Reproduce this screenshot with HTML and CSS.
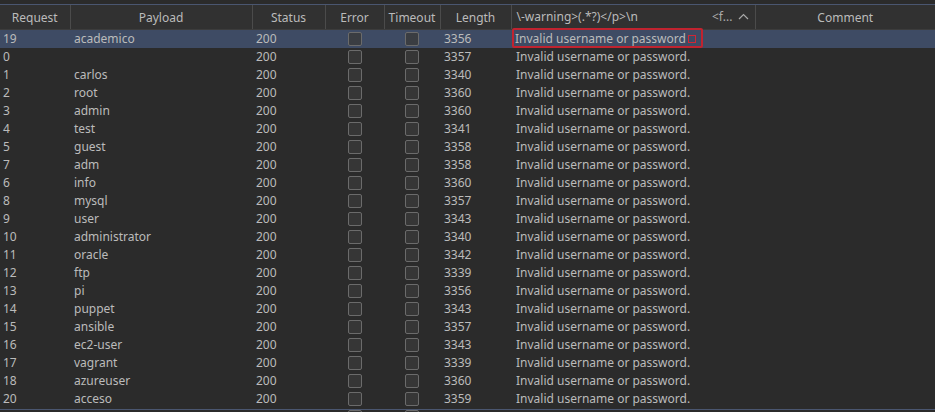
FILE: index.html
```html
<!DOCTYPE html>
<html>
<head>
<meta charset="utf-8">
<link rel="stylesheet" href="styles.css">
</head>
<body>
<div class="panel">
  <div class="topstrip"></div>
  <table class="grid">
    <colgroup>
      <col class="c-req"><col class="c-pay"><col class="c-stat"><col class="c-err"><col class="c-to"><col class="c-len"><col class="c-rx"><col class="c-com">
    </colgroup>
    <thead>
      <tr>
        <th>Request</th><th>Payload</th><th>Status</th><th>Error</th><th>Timeout</th><th>Length</th>
        <th class="rx-head"><span class="rx-title">\-warning&gt;(.*?)&lt;/p&gt;\n</span><span class="rx-tail">&lt;f... <svg class="chev" width="11" height="7" viewBox="0 0 11 7"><path d="M1 6 L5.5 1.5 L10 6" fill="none" stroke="#a9a9a9" stroke-width="1.2"/></svg></span></th>
        <th>Comment</th>
      </tr>
    </thead>
    <tbody>
      <tr class="sel"><td>19</td><td>academico</td><td>200</td><td class="cb"><span class="box"></span></td><td class="cb"><span class="box"></span></td><td>3356</td><td class="rx"><span class="mark">Invalid username or password<span class="caret"></span></span></td><td></td></tr>
      <tr><td>0</td><td></td><td>200</td><td class="cb"><span class="box"></span></td><td class="cb"><span class="box"></span></td><td>3357</td><td class="rx">Invalid username or password.</td><td></td></tr>
      <tr><td>1</td><td>carlos</td><td>200</td><td class="cb"><span class="box"></span></td><td class="cb"><span class="box"></span></td><td>3340</td><td class="rx">Invalid username or password.</td><td></td></tr>
      <tr><td>2</td><td>root</td><td>200</td><td class="cb"><span class="box"></span></td><td class="cb"><span class="box"></span></td><td>3360</td><td class="rx">Invalid username or password.</td><td></td></tr>
      <tr><td>3</td><td>admin</td><td>200</td><td class="cb"><span class="box"></span></td><td class="cb"><span class="box"></span></td><td>3360</td><td class="rx">Invalid username or password.</td><td></td></tr>
      <tr><td>4</td><td>test</td><td>200</td><td class="cb"><span class="box"></span></td><td class="cb"><span class="box"></span></td><td>3341</td><td class="rx">Invalid username or password.</td><td></td></tr>
      <tr><td>5</td><td>guest</td><td>200</td><td class="cb"><span class="box"></span></td><td class="cb"><span class="box"></span></td><td>3358</td><td class="rx">Invalid username or password.</td><td></td></tr>
      <tr><td>7</td><td>adm</td><td>200</td><td class="cb"><span class="box"></span></td><td class="cb"><span class="box"></span></td><td>3358</td><td class="rx">Invalid username or password.</td><td></td></tr>
      <tr><td>6</td><td>info</td><td>200</td><td class="cb"><span class="box"></span></td><td class="cb"><span class="box"></span></td><td>3360</td><td class="rx">Invalid username or password.</td><td></td></tr>
      <tr><td>8</td><td>mysql</td><td>200</td><td class="cb"><span class="box"></span></td><td class="cb"><span class="box"></span></td><td>3357</td><td class="rx">Invalid username or password.</td><td></td></tr>
      <tr><td>9</td><td>user</td><td>200</td><td class="cb"><span class="box"></span></td><td class="cb"><span class="box"></span></td><td>3343</td><td class="rx">Invalid username or password.</td><td></td></tr>
      <tr><td>10</td><td>administrator</td><td>200</td><td class="cb"><span class="box"></span></td><td class="cb"><span class="box"></span></td><td>3340</td><td class="rx">Invalid username or password.</td><td></td></tr>
      <tr><td>11</td><td>oracle</td><td>200</td><td class="cb"><span class="box"></span></td><td class="cb"><span class="box"></span></td><td>3342</td><td class="rx">Invalid username or password.</td><td></td></tr>
      <tr><td>12</td><td>ftp</td><td>200</td><td class="cb"><span class="box"></span></td><td class="cb"><span class="box"></span></td><td>3339</td><td class="rx">Invalid username or password.</td><td></td></tr>
      <tr><td>13</td><td>pi</td><td>200</td><td class="cb"><span class="box"></span></td><td class="cb"><span class="box"></span></td><td>3356</td><td class="rx">Invalid username or password.</td><td></td></tr>
      <tr><td>14</td><td>puppet</td><td>200</td><td class="cb"><span class="box"></span></td><td class="cb"><span class="box"></span></td><td>3343</td><td class="rx">Invalid username or password.</td><td></td></tr>
      <tr><td>15</td><td>ansible</td><td>200</td><td class="cb"><span class="box"></span></td><td class="cb"><span class="box"></span></td><td>3357</td><td class="rx">Invalid username or password.</td><td></td></tr>
      <tr><td>16</td><td>ec2-user</td><td>200</td><td class="cb"><span class="box"></span></td><td class="cb"><span class="box"></span></td><td>3343</td><td class="rx">Invalid username or password.</td><td></td></tr>
      <tr><td>17</td><td>vagrant</td><td>200</td><td class="cb"><span class="box"></span></td><td class="cb"><span class="box"></span></td><td>3339</td><td class="rx">Invalid username or password.</td><td></td></tr>
      <tr><td>18</td><td>azureuser</td><td>200</td><td class="cb"><span class="box"></span></td><td class="cb"><span class="box"></span></td><td>3360</td><td class="rx">Invalid username or password.</td><td></td></tr>
      <tr><td>20</td><td>acceso</td><td>200</td><td class="cb"><span class="box"></span></td><td class="cb"><span class="box"></span></td><td>3359</td><td class="rx">Invalid username or password.</td><td></td></tr>
      <tr class="cut"><td></td><td></td><td></td><td class="cb"><span class="box"></span></td><td class="cb"><span class="box"></span></td><td></td><td></td><td></td></tr>
    </tbody>
  </table>
  <div class="bottomline"></div>
</div>
</body>
</html>
```
FILE: styles.css
```css
html, body {
  margin: 0;
  padding: 0;
  background: #2b2b2b;
}
.panel {
  position: relative;
  width: 935px;
  height: 412px;
  overflow: hidden;
  background: #2b2b2b;
  font-family: "Noto Sans", "Open Sans", sans-serif;
  font-size: 12px;
  color: #bbbbbb;
}
.topstrip {
  height: 4px;
  background: #2b2b2b;
  border-bottom: 1px solid #4a5670;
}
.grid {
  width: 935px;
  border-collapse: collapse;
  table-layout: fixed;
}
.c-req { width: 70px; }
.c-pay { width: 182px; }
.c-stat { width: 73px; }
.c-err { width: 59px; }
.c-to { width: 56px; }
.c-len { width: 71px; }
.c-rx { width: 244px; }
.c-com { width: 180px; }
th {
  height: 24px;
  padding: 0;
  font-weight: normal;
  text-align: center;
  color: #bbbbbb;
  background: #313131;
  border-right: 1px solid #4b4b4b;
  border-bottom: 1px solid #3c3c3c;
  white-space: nowrap;
  overflow: hidden;
}
th:last-child { border-right: none; }
.rx-head {
  text-align: left;
  padding: 0 4px 0 5px;
}
.rx-head .rx-title { float: left; line-height: 24px; }
.rx-head .rx-tail { float: right; line-height: 24px; color: #a9a9a9; padding-right: 2px; }
.chev { vertical-align: 1px; margin-left: 2px; }
td {
  height: 18px;
  padding: 0 0 0 3px;
  white-space: nowrap;
  overflow: hidden;
  line-height: 18px;
  vertical-align: top;
}
td:nth-child(2) { padding-left: 4px; }
td:nth-child(3) { padding-left: 4px; }
td:nth-child(6) { padding-left: 4px; }
td.rx { padding-left: 5px; overflow: visible; }
td.cb { padding: 0; text-align: center; line-height: 0; }
.box {
  display: inline-block;
  width: 12px;
  height: 12px;
  border: 1px solid #6b6b6b;
  border-radius: 2px;
  background: #363636;
  margin-top: 2px;
}
tr.sel td { background: #3e4b64; }
tr.sel .box { background: #3a3d42; }
.mark {
  display: inline-block;
  margin-left: -4px;
  margin-top: -2px;
  padding: 0 4px 0 1px;
  height: 16px;
  line-height: 18px;
  border: 2px solid #c0232f;
  border-radius: 2px;
  width: 182px;
  vertical-align: top;
}
.caret {
  display: inline-block;
  width: 6px;
  height: 6px;
  border: 1.5px solid #d12634;
  margin-left: 2px;
  vertical-align: 0;
}
.bottomline {
  position: absolute;
  left: 0;
  right: 0;
  top: 409px;
  height: 1px;
  background: #4a5670;
}
```
